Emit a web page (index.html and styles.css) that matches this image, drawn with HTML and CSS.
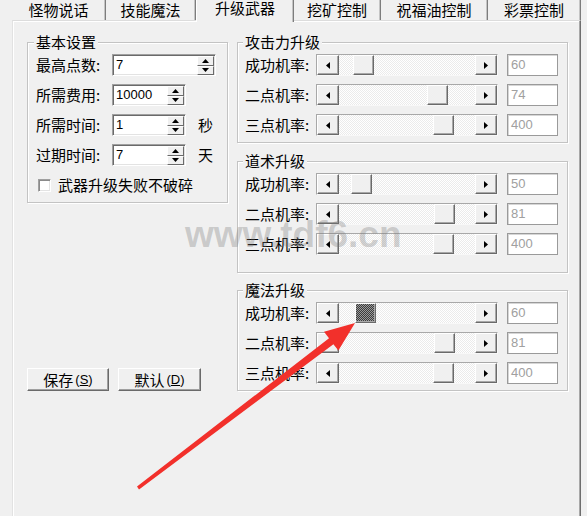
FILE: index.html
```html
<!DOCTYPE html>
<html lang="zh-CN">
<head>
<meta charset="utf-8">
<title>升级武器</title>
<link rel="stylesheet" href="styles.css">
</head>
<body>
<div class="tabs">
  <div class="tab t1">怪物说话</div>
  <div class="tab t2">技能魔法</div>
  <div class="tab tab-active t3">升级武器</div>
  <div class="tab t4">挖矿控制</div>
  <div class="tab t5">祝福油控制</div>
  <div class="tab t6">彩票控制</div>
</div>
<div class="panel">
  <div class="panel-body">
    <div class="col-left">
      <div class="group group-basic">
        <div class="group-title">基本设置</div>
        <div class="rows">
          <div class="row">
            <span class="lbl lbl-l">最高点数:</span>
            <div class="edit edit-wide"><span class="edit-text">7</span>
              <span class="spin"><span class="spin-btn"><svg width="7" height="4"><polygon points="0,4 3.5,0 7,4"/></svg></span><span class="spin-btn"><svg width="7" height="4"><polygon points="0,0 7,0 3.5,4"/></svg></span></span>
            </div>
          </div>
          <div class="row">
            <span class="lbl lbl-l">所需费用:</span>
            <div class="edit"><span class="edit-text">10000</span>
              <span class="spin"><span class="spin-btn"><svg width="7" height="4"><polygon points="0,4 3.5,0 7,4"/></svg></span><span class="spin-btn"><svg width="7" height="4"><polygon points="0,0 7,0 3.5,4"/></svg></span></span>
            </div>
          </div>
          <div class="row">
            <span class="lbl lbl-l">所需时间:</span>
            <div class="edit"><span class="edit-text">1</span>
              <span class="spin"><span class="spin-btn"><svg width="7" height="4"><polygon points="0,4 3.5,0 7,4"/></svg></span><span class="spin-btn"><svg width="7" height="4"><polygon points="0,0 7,0 3.5,4"/></svg></span></span>
            </div>
            <span class="unit">秒</span>
          </div>
          <div class="row">
            <span class="lbl lbl-l">过期时间:</span>
            <div class="edit"><span class="edit-text">7</span>
              <span class="spin"><span class="spin-btn"><svg width="7" height="4"><polygon points="0,4 3.5,0 7,4"/></svg></span><span class="spin-btn"><svg width="7" height="4"><polygon points="0,0 7,0 3.5,4"/></svg></span></span>
            </div>
            <span class="unit">天</span>
          </div>
          <div class="row">
            <span class="check"></span>
            <span class="check-text">武器升级失败不破碎</span>
          </div>
        </div>
      </div>
      <div class="buttons">
        <div class="btn btn-save">保存<span class="acc">(<u>S</u>)</span></div>
        <div class="btn btn-def">默认<span class="acc">(<u>D</u>)</span></div>
      </div>
    </div>

    <div class="col-right">
      <div class="group group-r g1">
        <div class="group-title">攻击力升级</div>
        <div class="rows">
          <div class="row">
            <span class="lbl lbl-r">成功机率:</span>
            <div class="sb"><span class="sb-btn"><svg width="4" height="7"><polygon points="4,0 0,3.5 4,7"/></svg></span><span class="sb-track"><span class="sb-thumb" style="margin-left:14px"></span></span><span class="sb-btn"><svg width="4" height="7"><polygon points="0,0 4,3.5 0,7"/></svg></span></div>
            <span class="val">60</span>
          </div>
          <div class="row">
            <span class="lbl lbl-r">二点机率:</span>
            <div class="sb"><span class="sb-btn"><svg width="4" height="7"><polygon points="4,0 0,3.5 4,7"/></svg></span><span class="sb-track"><span class="sb-thumb" style="margin-left:88px"></span></span><span class="sb-btn"><svg width="4" height="7"><polygon points="0,0 4,3.5 0,7"/></svg></span></div>
            <span class="val">74</span>
          </div>
          <div class="row">
            <span class="lbl lbl-r">三点机率:</span>
            <div class="sb"><span class="sb-btn"><svg width="4" height="7"><polygon points="4,0 0,3.5 4,7"/></svg></span><span class="sb-track"><span class="sb-thumb" style="margin-left:94px"></span></span><span class="sb-btn"><svg width="4" height="7"><polygon points="0,0 4,3.5 0,7"/></svg></span></div>
            <span class="val">400</span>
          </div>
        </div>
      </div>

      <div class="group group-r g2">
        <div class="group-title">道术升级</div>
        <div class="rows">
          <div class="row">
            <span class="lbl lbl-r">成功机率:</span>
            <div class="sb"><span class="sb-btn"><svg width="4" height="7"><polygon points="4,0 0,3.5 4,7"/></svg></span><span class="sb-track"><span class="sb-thumb" style="margin-left:12px"></span></span><span class="sb-btn"><svg width="4" height="7"><polygon points="0,0 4,3.5 0,7"/></svg></span></div>
            <span class="val">50</span>
          </div>
          <div class="row">
            <span class="lbl lbl-r">二点机率:</span>
            <div class="sb"><span class="sb-btn"><svg width="4" height="7"><polygon points="4,0 0,3.5 4,7"/></svg></span><span class="sb-track"><span class="sb-thumb" style="margin-left:95px"></span></span><span class="sb-btn"><svg width="4" height="7"><polygon points="0,0 4,3.5 0,7"/></svg></span></div>
            <span class="val">81</span>
          </div>
          <div class="row">
            <span class="lbl lbl-r">三点机率:</span>
            <div class="sb"><span class="sb-btn"><svg width="4" height="7"><polygon points="4,0 0,3.5 4,7"/></svg></span><span class="sb-track"><span class="sb-thumb" style="margin-left:94px"></span></span><span class="sb-btn"><svg width="4" height="7"><polygon points="0,0 4,3.5 0,7"/></svg></span></div>
            <span class="val">400</span>
          </div>
        </div>
      </div>

      <div class="group group-r g3">
        <div class="group-title">魔法升级</div>
        <div class="rows">
          <div class="row">
            <span class="lbl lbl-r">成功机率:</span>
            <div class="sb"><span class="sb-btn"><svg width="4" height="7"><polygon points="4,0 0,3.5 4,7"/></svg></span><span class="sb-track"><span class="sb-thumb sb-thumb-focus" style="margin-left:16px"></span></span><span class="sb-btn"><svg width="4" height="7"><polygon points="0,0 4,3.5 0,7"/></svg></span></div>
            <span class="val">60</span>
          </div>
          <div class="row">
            <span class="lbl lbl-r">二点机率:</span>
            <div class="sb"><span class="sb-btn"><svg width="4" height="7"><polygon points="4,0 0,3.5 4,7"/></svg></span><span class="sb-track"><span class="sb-thumb" style="margin-left:95px"></span></span><span class="sb-btn"><svg width="4" height="7"><polygon points="0,0 4,3.5 0,7"/></svg></span></div>
            <span class="val">81</span>
          </div>
          <div class="row">
            <span class="lbl lbl-r">三点机率:</span>
            <div class="sb"><span class="sb-btn"><svg width="4" height="7"><polygon points="4,0 0,3.5 4,7"/></svg></span><span class="sb-track"><span class="sb-thumb" style="margin-left:94px"></span></span><span class="sb-btn"><svg width="4" height="7"><polygon points="0,0 4,3.5 0,7"/></svg></span></div>
            <span class="val">400</span>
          </div>
        </div>
      </div>
    </div>
  </div>
</div>

<div class="watermark">www.tdf6.cn</div>

<svg class="arrow" width="587" height="516" viewBox="0 0 587 516">
  <polygon points="137,486.6 329,338.2 324,331.8 355,323 338.4,350.6 333.4,344.2 139,489.4" fill="#f2302b"/>
</svg>
</body>
</html>
```

FILE: styles.css
```css
* {
  box-sizing: border-box;
}

html,
body {
  margin: 0;
  padding: 0;
}

body {
  width: 587px;
  height: 516px;
  overflow: hidden;
  position: relative;
  background: #f0f0f0;
  font-family: "Noto Sans CJK SC", "Noto Sans", sans-serif;
  font-size: 15px;
  color: #000;
}

/* ---------- tabs ---------- */
.tabs {
  display: flex;
  height: 20px;
  padding-left: 12px;
  position: relative;
  z-index: 2;
}

.tab {
  height: 20px;
  line-height: 20px;
  text-align: center;
  border-right: 1px solid #7d7d7d;
  box-shadow: inset -1px 0 #c4c4c4;
  white-space: nowrap;
}

.t1 { width: 94px; }
.t2 { width: 90px; }
.t3 { width: 98px; }
.t4 { width: 87px; }
.t5 { width: 107px; }
.t6 { width: 93px; }

.tab-active {
  height: 22px;
  line-height: 15px;
  background: #f0f0f0;
  border-left: 1px solid #ffffff;
}

/* ---------- tab page ---------- */
.panel {
  margin-left: 12px;
  width: 569px;
  height: 520px;
  border-top: 1px solid #dcdcdc;
  border-left: 1px solid #e2e2e2;
  border-right: 1px solid #6e6e6e;
  box-shadow: inset -1px 0 #a8a8a8, inset 1px 1px #ffffff;
  padding: 21px 12px 0 14px;
}

.panel-body {
  display: flex;
  gap: 9px;
  align-items: stretch;
}

.col-left {
  width: 201px;
  display: flex;
  flex-direction: column;
  justify-content: space-between;
}

.col-right {
  width: 331px;
  display: flex;
  flex-direction: column;
}

/* ---------- group boxes ---------- */
.group {
  border: 1px solid #c3c3c3;
  box-shadow: 1px 1px 0 #ffffff, inset 1px 1px 0 #ffffff;
  padding: 11px 8px 6px 8px;
}

.group-title {
  display: table;
  margin: -21px 0 3px -2px;
  padding: 0 2px;
  height: 18px;
  line-height: 18px;
  background: #f0f0f0;
  white-space: nowrap;
}

.group-r {
  padding: 11px 8px 6px 7px;
}

.g2 {
  margin-top: 18px;
  padding-bottom: 17px;
}

.g3 {
  margin-top: 17px;
}

.rows {
  display: flex;
  flex-direction: column;
  gap: 8px;
}

.row {
  display: flex;
  align-items: center;
  height: 22px;
}

.lbl {
  line-height: 18px;
  white-space: nowrap;
}

.lbl-l {
  width: 76px;
}

.lbl-r {
  width: 71px;
}

/* ---------- edit with spinner ---------- */
.edit {
  display: flex;
  width: 74px;
  height: 22px;
  background: #ffffff;
  border: 1px solid;
  border-color: #a0a0a0 #ffffff #ffffff #a0a0a0;
  box-shadow: inset 1px 1px #6a6a6a, inset -1px -1px #e3e3e3;
}

.edit-wide {
  width: 104px;
}

.edit-text {
  flex: 1;
  padding-left: 3px;
  font-family: "Liberation Sans", Arial, sans-serif;
  font-size: 13px;
  line-height: 20px;
}

.spin {
  width: 18px;
  display: flex;
  flex-direction: column;
  padding: 1px 1px 0 0;
}

.spin-btn {
  flex: 1;
  display: flex;
  align-items: center;
  justify-content: center;
  background: #f0f0f0;
  border: 1px solid;
  border-color: #ffffff #6a6a6a #6a6a6a #ffffff;
}

.spin-btn svg {
  display: block;
  fill: #000;
}

.unit {
  margin-left: 12px;
  line-height: 18px;
}

/* ---------- checkbox ---------- */
.check {
  width: 13px;
  height: 13px;
  margin-left: 2px;
  background: #ffffff;
  border: 1px solid;
  border-color: #a0a0a0 #ffffff #ffffff #a0a0a0;
  box-shadow: inset 1px 1px #8a8a8a, inset -1px -1px #e3e3e3;
}

.check-text {
  margin-left: 7px;
  line-height: 18px;
  white-space: nowrap;
}

/* ---------- buttons ---------- */
.buttons {
  display: flex;
  gap: 9px;
}

.btn {
  width: 82px;
  height: 23px;
  display: flex;
  align-items: center;
  justify-content: center;
  background: #f0f0f0;
  border: 1px solid;
  border-color: #ffffff #6a6a6a #6a6a6a #ffffff;
  box-shadow: inset -1px -1px #a0a0a0;
  line-height: 18px;
}

.btn-def {
  width: 83px;
}

.acc {
  font-family: "Liberation Sans", Arial, sans-serif;
  font-size: 13px;
  margin-left: 2px;
}

/* ---------- scrollbars ---------- */
.sb {
  display: flex;
  width: 182px;
  height: 22px;
  border: 1px solid;
  border-color: #a8a8a8 #f8f8f8 #f8f8f8 #a8a8a8;
}

.sb-btn {
  width: 22px;
  height: 20px;
  display: flex;
  align-items: center;
  justify-content: center;
  background: #f0f0f0;
  border: 1px solid;
  border-color: #ffffff #6a6a6a #6a6a6a #ffffff;
  box-shadow: inset -1px -1px #a8a8a8;
}

.sb-btn svg {
  display: block;
  fill: #000;
}

.sb-track {
  flex: 1;
  display: flex;
  background: repeating-conic-gradient(#ffffff 0 25%, #ebebeb 0 50%) 0 0 / 2px 2px;
}

.sb-thumb {
  width: 21px;
  height: 20px;
  background: #f0f0f0;
  border: 1px solid;
  border-color: #ffffff #6a6a6a #6a6a6a #ffffff;
  box-shadow: inset -1px -1px #a8a8a8;
}

.sb-thumb-focus {
  background: repeating-conic-gradient(#3c3c3c 0 25%, #9a9a9a 0 50%) 0 0 / 2px 2px;
}

/* ---------- value boxes ---------- */
.val {
  width: 51px;
  height: 22px;
  margin-left: 9px;
  background: #ffffff;
  border: 1px solid #9a9a9a;
  box-shadow: inset 1px 1px #d6d6d6;
  padding-left: 3px;
  font-family: "Liberation Sans", Arial, sans-serif;
  font-size: 13px;
  line-height: 20px;
  color: #a0a0a0;
}

/* ---------- overlays ---------- */
.watermark {
  position: absolute;
  left: 185px;
  top: 216px;
  font-family: "Liberation Sans", Arial, sans-serif;
  font-weight: bold;
  font-size: 37px;
  line-height: 37px;
  color: rgba(120, 120, 120, 0.32);
  white-space: nowrap;
  z-index: 5;
}

.arrow {
  position: absolute;
  left: 0;
  top: 0;
  z-index: 10;
  pointer-events: none;
}
```
